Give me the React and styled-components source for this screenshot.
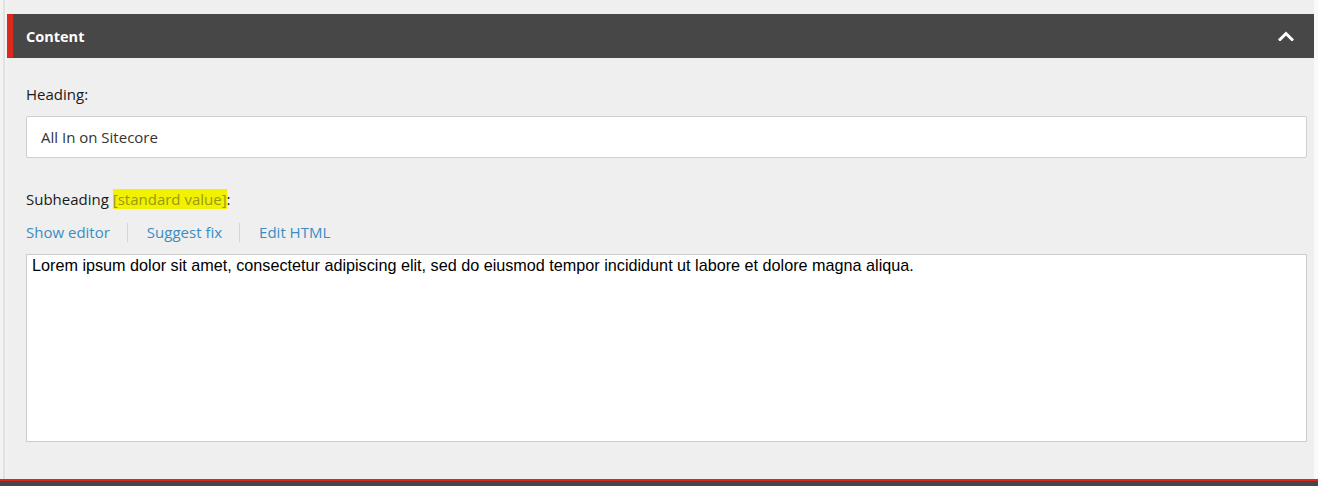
import React from 'react';
import styled, { createGlobalStyle } from 'styled-components';

const GlobalStyle = createGlobalStyle`
  html, body {
    margin: 0;
    padding: 0;
    background: #efefef;
  }
  body {
    font-family: 'Open Sans', 'Noto Sans', sans-serif;
    overflow: hidden;
  }
`;

const Page = styled.div`
  width: 1318px;
  height: 486px;
  display: flex;
  flex-direction: column;
`;

const Frame = styled.div`
  flex: 1;
  display: flex;
  min-height: 0;
`;

const Gutter = styled.div`
  width: 7px;
  background: #f2f2f2;
  display: flex;
  padding-left: 3px;
  box-sizing: border-box;
`;

const GutterLine = styled.div`
  width: 2px;
  background: #e2e2e2;
`;

const Main = styled.div`
  flex: 1;
  padding-top: 14px;
  background: #efefef;
  display: flex;
  flex-direction: column;
`;

const RightStrip = styled.div`
  width: 4px;
  background: #f9f9f9;
`;

const SectionHeader = styled.div`
  height: 44px;
  background: #474747;
  border-left: 6px solid #dc291e;
  display: flex;
  align-items: center;
  justify-content: space-between;
  padding: 0 20px 0 13px;
  color: #fff;
  font-weight: 700;
  font-size: 14.5px;
`;

const Body = styled.div`
  padding: 26px 7px 0 19px;
`;

const Label = styled.div`
  font-size: 15px;
  line-height: 20px;
  color: #1a1a1a;
  margin-top: ${({ $top }) => $top || 0}px;
`;

const Marker = styled.span`
  background: #f1f100;
  color: #999918;
`;

const TextInput = styled.div`
  margin-top: 12px;
  height: 42px;
  box-sizing: border-box;
  background: #fff;
  border: 1px solid #cfcfcf;
  border-radius: 2px;
  display: flex;
  align-items: center;
  padding-left: 14px;
  font-size: 15px;
  color: #333;
`;

const LinkBar = styled.div`
  display: flex;
  align-items: center;
  margin-top: 13px;
  height: 20px;
`;

const EditorLink = styled.a`
  color: #3a8dc3;
  font-size: 15px;
  text-decoration: none;
  padding: 0 ${({ $last }) => ($last ? 0 : 17)}px 0 ${({ $first }) => ($first ? 0 : 19)}px;
  border-right: ${({ $last }) => ($last ? 'none' : '1px solid #d6d6d6')};
  line-height: 19px;
  cursor: pointer;
`;

const RichArea = styled.div`
  margin-top: 12px;
  height: 188px;
  box-sizing: border-box;
  background: #fff;
  border: 1px solid #cccccc;
  padding: 1px 5px;
  font-family: 'Liberation Sans', Arial, sans-serif;
  font-size: 16.2px;
  line-height: 18px;
  color: #000;
`;

const BottomBar = styled.div`
  height: 5px;
  background: #474747;
  border-top: 2px solid #d9281d;
`;

const Chevron = () => (
  <svg width="16" height="10" viewBox="0 0 16 10">
    <polyline
      points="2,8.5 8,2.5 14,8.5"
      fill="none"
      stroke="#fff"
      strokeWidth="3"
      strokeLinecap="square"
    />
  </svg>
);

export default function App() {
  return (
    <Page>
      <GlobalStyle />
      <Frame>
        <Gutter>
          <GutterLine />
        </Gutter>
        <Main>
          <SectionHeader>
            <span>Content</span>
            <Chevron />
          </SectionHeader>
          <Body>
            <Label>Heading:</Label>
            <TextInput>All In on Sitecore</TextInput>
            <Label $top={31}>
              Subheading <Marker>[standard value]</Marker>:
            </Label>
            <LinkBar>
              <EditorLink $first>Show editor</EditorLink>
              <EditorLink>Suggest fix</EditorLink>
              <EditorLink $last>Edit HTML</EditorLink>
            </LinkBar>
            <RichArea>
              Lorem ipsum dolor sit amet, consectetur adipiscing elit, sed do eiusmod tempor
              incididunt ut labore et dolore magna aliqua.
            </RichArea>
          </Body>
        </Main>
        <RightStrip />
      </Frame>
      <BottomBar />
    </Page>
  );
}
